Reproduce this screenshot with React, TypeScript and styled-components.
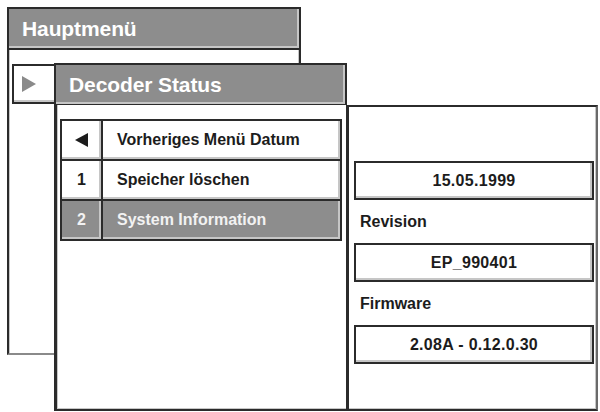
// Decoder Status screen

// ___________________________________________________________________

import * as React from 'react'
import styled, { createGlobalStyle } from 'styled-components'

// ___________________________________________________________________

const colors = {
  ink: '#1c1c1c',
  line: '#2b2b2b',
  bevel: '#c6c6c6',
  gray: '#8d8d8d',
  grayText: '#f2f2f2',
  white: '#ffffff'
}

const GlobalStyle = createGlobalStyle`
  html, body {
    margin: 0;
    padding: 0;
    background: ${colors.white};
  }
  body {
    font-family: "Liberation Sans", Arial, Helvetica, sans-serif;
    -webkit-font-smoothing: antialiased;
  }
  * {
    box-sizing: border-box;
  }
`

type MenuItem = {
  key: string
  label: string
  active?: boolean
}

const items: MenuItem[] = [
  { key: 'back', label: 'Vorheriges Menü Datum' },
  { key: '1', label: 'Speicher löschen' },
  { key: '2', label: 'System Information', active: true }
]

const fields = [
  { label: '', value: '15.05.1999' },
  { label: 'Revision', value: 'EP_990401' },
  { label: 'Firmware', value: '2.08A - 0.12.0.30' }
]

// ___________________________________________________________________

const Arrow: React.FC<{ dir: 'left' | 'right'; color: string }> = ({
  dir,
  color
}) => (
  <svg width="16" height="16" viewBox="0 0 16 16">
    {dir === 'left' ? (
      <polygon points="14,1 14,15 1,8" fill={color} />
    ) : (
      <polygon points="2,0 2,16 16,8" fill={color} />
    )}
  </svg>
)

const App: React.FC = () => (
  <>
    <GlobalStyle />
    <Desktop>
      <MainWindow>
        <TitleBar>Hauptmenü</TitleBar>
        <MainBody>
          <SubmenuKey>
            <Arrow dir="right" color="#8a8a8a" />
          </SubmenuKey>
        </MainBody>
      </MainWindow>

      <DecoderWindow>
        <TitleBar>Decoder Status</TitleBar>
        <Spacer />
        <MenuBody>
          {items.map(item => (
            <Row key={item.key}>
              <Cell $active={item.active} $center>
                {item.key === 'back' ? (
                  <Arrow dir="left" color={colors.ink} />
                ) : (
                  item.key
                )}
              </Cell>
              <Cell $active={item.active}>{item.label}</Cell>
            </Row>
          ))}
        </MenuBody>
        <InfoPanel>
          {fields.map(f => (
            <Field key={f.value}>
              <FieldLabel>{f.label}</FieldLabel>
              <ValueBox>{f.value}</ValueBox>
            </Field>
          ))}
        </InfoPanel>
      </DecoderWindow>
    </Desktop>
  </>
)

export default App

// ___________________________________________________________________

const Desktop = styled.div`
  position: relative;
  width: 600px;
  height: 412px;
  overflow: hidden;
  background: ${colors.white};
`

const MainWindow = styled.div`
  position: absolute;
  left: 7px;
  top: 7px;
  width: 294px;
  height: 348px;
  display: flex;
  flex-direction: column;
`

const TitleBar = styled.div`
  height: 43px;
  display: flex;
  align-items: center;
  padding-left: 13px;
  background: ${colors.gray};
  border: 2px solid ${colors.line};
  box-shadow: inset -2px -2px 0 ${colors.bevel};
  color: ${colors.white};
  font-size: 21px;
  font-weight: 700;
  letter-spacing: -0.1px;
`

const MainBody = styled.div`
  flex: 1;
  padding: 14px 0 0 3px;
  border: 2px solid ${colors.line};
  border-top: 0;
  border-bottom-color: #8a8a8a;
  box-shadow: inset 1px 0 0 ${colors.bevel}, inset -1px 0 0 ${colors.bevel};
  background: ${colors.white};
`

const SubmenuKey = styled.div`
  width: 46px;
  height: 40px;
  display: flex;
  align-items: center;
  justify-content: center;
  padding-right: 14px;
  border: 2px solid ${colors.line};
  box-shadow: inset -2px -2px 0 ${colors.bevel};
`

const DecoderWindow = styled.div`
  position: absolute;
  left: 54px;
  top: 63px;
  width: 544px;
  height: 348px;
  display: grid;
  grid-template-columns: 293px 251px;
  grid-template-rows: 42px 1fr;
`

const Spacer = styled.div``

const MenuBody = styled.div`
  display: flex;
  flex-direction: column;
  padding: 14px 5px 0 3px;
  background: ${colors.white};
  border-left: 3px solid ${colors.line};
  border-bottom: 2px solid ${colors.line};
  box-shadow: inset 1px 0 0 ${colors.bevel}, inset 0 -1px 0 ${colors.bevel};
`

const Row = styled.div`
  display: grid;
  grid-template-columns: 43px 1fr;
  height: 42px;

  & + & {
    margin-top: -2px;
  }
`

const Cell = styled.div<{ $active?: boolean; $center?: boolean }>`
  display: flex;
  align-items: center;
  justify-content: ${p => (p.$center ? 'center' : 'flex-start')};
  padding-left: ${p => (p.$center ? '0' : '14px')};
  margin-left: ${p => (p.$center ? '0' : '-2px')};
  background: ${p => (p.$active ? colors.gray : colors.white)};
  color: ${p => (p.$active ? colors.grayText : colors.ink)};
  border: 2px solid ${colors.line};
  box-shadow: inset -2px -2px 0 ${colors.bevel};
  font-size: 16px;
  font-weight: 700;
`

const InfoPanel = styled.div`
  display: flex;
  flex-direction: column;
  padding: 11px 2px 0 5px;
  margin-left: -1px;
  background: ${colors.white};
  border-top: 2px solid ${colors.line};
  border-left: 3px solid ${colors.line};
  border-right: 2px solid #6a6a6a;
  border-bottom: 2px solid ${colors.line};
  box-shadow: inset -1px -1px 0 ${colors.bevel};
`

const Field = styled.div`
  display: flex;
  flex-direction: column;
`

const FieldLabel = styled.div`
  height: 43px;
  display: flex;
  align-items: center;
  padding-left: 6px;
  color: ${colors.ink};
  font-size: 16px;
  font-weight: 700;
`

const ValueBox = styled.div`
  height: 39px;
  display: flex;
  align-items: center;
  justify-content: center;
  border: 2px solid ${colors.line};
  box-shadow: inset -2px -2px 0 ${colors.bevel};
  color: ${colors.ink};
  font-size: 16px;
  font-weight: 700;
  letter-spacing: 0.3px;
`
